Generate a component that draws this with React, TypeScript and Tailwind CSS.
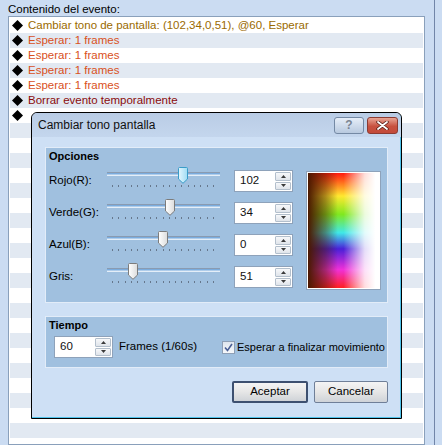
import React from 'react'

const ROWS = [
  { text: 'Cambiar tono de pantalla: (102,34,0,51), @60, Esperar', color: 'text-[#9a6a00]' },
  { text: 'Esperar: 1 frames', color: 'text-[#d9501c]' },
  { text: 'Esperar: 1 frames', color: 'text-[#d9501c]' },
  { text: 'Esperar: 1 frames', color: 'text-[#d9501c]' },
  { text: 'Esperar: 1 frames', color: 'text-[#d9501c]' },
  { text: 'Borrar evento temporalmente', color: 'text-[#8a0c0c]' },
  { text: '', color: '' },
]

const SLIDERS = [
  { label: 'Rojo(R):', value: '102', pos: 0.7, focus: true },
  { label: 'Verde(G):', value: '34', pos: 0.567, focus: false },
  { label: 'Azul(B):', value: '0', pos: 0.5, focus: false },
  { label: 'Gris:', value: '51', pos: 0.2, focus: false },
]

function Diamond() {
  return (
    <svg width="11" height="11" viewBox="0 0 11 11" className="shrink-0">
      <polygon points="5.5,0 11,5.5 5.5,11 0,5.5" fill="#000" />
    </svg>
  )
}

function Spin({ value, w = 'w-[59px]' }: { value: string; w?: string }) {
  return (
    <div className={`${w} h-[22px] border border-[#8ea2ba] bg-white flex items-center shrink-0`}>
      <span className="flex-1 pl-[5px] text-[11.5px] text-[#111] leading-none">{value}</span>
      <div className="w-[17px] h-full flex flex-col gap-px py-px pr-px">
        {[0, 1].map(i => (
          <div key={i} className="flex-1 border border-[#b3bfcc] rounded-[1px] bg-[linear-gradient(#f7f8fa,#dfe4ea)] flex items-center justify-center">
            <svg width="5" height="3" viewBox="0 0 5 3">
              <polygon points={i === 0 ? '2.5,0 5,3 0,3' : '0,0 5,0 2.5,3'} fill="#3a3a3a" />
            </svg>
          </div>
        ))}
      </div>
    </div>
  )
}

function Slider({ pos, focus }: { pos: number; focus: boolean }) {
  return (
    <div className="relative w-[113px] h-[32px] shrink-0">
      <div className="absolute left-0 right-0 top-[7px] h-[4px] border-t border-[#8a9bb1] bg-[linear-gradient(#5f9ad6,#ffffff)]" />
      <div className="absolute left-[5px] w-[102px] top-[20px] h-[2px] flex justify-between">
        {Array.from({ length: 17 }).map((_, i) => (
          <div key={i} className="w-px h-full bg-[#66778c]" />
        ))}
      </div>
      <svg
        width="10"
        height="17"
        viewBox="0 0 10 17"
        className="absolute top-[2px]"
        style={{ left: Math.round(5 + pos * 101 - 4.5) }}
      >
        <defs>
          <linearGradient id={focus ? 'tf' : 'tn'} x1="0" y1="0" x2="1" y2="0">
            <stop offset="0" stopColor={focus ? '#e4f6fd' : '#ffffff'} />
            <stop offset="1" stopColor={focus ? '#9fdcf4' : '#dcdcdc'} />
          </linearGradient>
        </defs>
        <path
          d="M1.5 0.5 H8.5 Q9.5 0.5 9.5 1.5 V12 L5 16.3 L0.5 12 V1.5 Q0.5 0.5 1.5 0.5 Z"
          fill={`url(#${focus ? 'tf' : 'tn'})`}
          stroke={focus ? '#3a9cc8' : '#7c7c7c'}
        />
      </svg>
    </div>
  )
}

export default function App() {
  return (
    <div className="relative w-[442px] h-[445px] overflow-hidden bg-[#cbdcf2] font-['Liberation_Sans',Arial,sans-serif] text-[11px] text-black">
      <div className="flex h-full">
        <div className="w-[434px] flex flex-col pl-[8px] pr-[9px]">
          <div className="h-[16px] text-[11.5px] leading-[16px] pt-px">Contenido del evento:</div>
          <div className="flex-1 border border-[#8aa0bb] bg-white p-px overflow-hidden">
            {Array.from({ length: 29 }).map((_, i) => {
              const r = ROWS[i]
              return (
                <div key={i} className={`h-[15px] flex items-center gap-[5px] pl-[2px] ${i % 2 ? 'bg-[#e2e9f2]' : 'bg-white'}`}>
                  {r && <Diamond />}
                  {r && <span className={`${r.color} text-[11.5px] leading-none pt-px`}>{r.text}</span>}
                </div>
              )
            })}
          </div>
        </div>
        <div className="w-px h-full bg-[#7185a8]" />
      </div>

      {/* dialog */}
      <div className="absolute left-[31px] top-[112px] w-[371px] h-[307px] border border-black rounded-t-[6px] bg-[#cee0f5] shadow-[inset_-1px_-1px_0_#4ec2ea] flex flex-col overflow-hidden">
        <div className="h-[24px] shrink-0 flex items-center pl-[6px] pr-[3px] rounded-t-[5px] bg-[linear-gradient(#b9cce5,#c4d6ed)]">
          <span className="flex-1 text-[12px] text-[#111]">Cambiar tono pantalla</span>
          <div className="w-[30px] h-[17px] rounded-[3px] border border-[#7489a4] bg-[linear-gradient(#e6eef8,#b8c9df)] flex items-center justify-center mr-[3px]">
            <span className="text-[12px] font-bold text-[#7b8593] leading-none">?</span>
          </div>
          <div className="w-[31px] h-[17px] rounded-[3px] border border-[#8c3b32] bg-[linear-gradient(#e8a595,#c8513f_55%,#c34a3a)] flex items-center justify-center">
            <svg width="13" height="9" viewBox="0 0 13 9">
              <path d="M2 1 L11 8 M11 1 L2 8" stroke="#5a2018" strokeWidth="3.4" strokeLinecap="round" />
              <path d="M2 1 L11 8 M11 1 L2 8" stroke="#fff" strokeWidth="1.8" strokeLinecap="round" />
            </svg>
          </div>
        </div>

        <div className="flex-1 flex flex-col px-[13px] pt-[10px]">
          {/* Opciones */}
          <div className="h-[156px] border border-[#e2ecf8] bg-[#a0c0df] flex flex-col">
            <div className="h-[17px] pl-[3px] font-bold leading-[17px]">Opciones</div>
            <div className="flex">
              <div className="flex flex-col">
                {SLIDERS.map(s => (
                  <div key={s.label} className="h-[32px] flex items-center">
                    <span className="w-[61px] pl-[3px] text-[11.5px]">{s.label}</span>
                    <Slider pos={s.pos} focus={s.focus} />
                    <div className="w-[14px]" />
                    <Spin value={s.value} />
                  </div>
                ))}
              </div>
              <div className="ml-[13px] mt-[6px] w-[75px] h-[119px] border border-[#8ea2ba] bg-white p-px">
                <div className="relative w-full h-full bg-[linear-gradient(to_bottom,#ff1a10,#ffe830_20%,#80e820_36%,#40e8e8_52%,#4a20d8_66%,#f030d8_84%,#ff2020)]">
                  <div className="absolute inset-0 bg-[linear-gradient(to_right,rgba(75,25,0,1),rgba(75,25,0,0.45)_25%,rgba(75,25,0,0)_42%,rgba(255,255,255,0)_50%,rgba(255,255,255,0.85)_80%,rgba(255,255,255,1)_95%)]" />
                </div>
              </div>
            </div>
          </div>

          {/* Tiempo */}
          <div className="mt-[13px] h-[52px] border border-[#e2ecf8] bg-[#a0c0df] flex flex-col">
            <div className="h-[17px] pl-[3px] font-bold leading-[17px]">Tiempo</div>
            <div className="flex items-center pl-[8px] mt-[2px] whitespace-nowrap">
              <Spin value="60" />
              <span className="ml-[6px] w-[103px] text-[11.5px]">Frames (1/60s)</span>
              <div className="w-[13px] h-[13px] shrink-0 border border-[#8e9fb5] bg-[linear-gradient(#dfe6ee,#f6f8fb)] flex items-center justify-center">
                <svg width="9" height="9" viewBox="0 0 9 9">
                  <path d="M1 4.5 L3.5 7.5 L8 1" stroke="#4a5f95" strokeWidth="1.6" fill="none" />
                </svg>
              </div>
              <span className="ml-[2px] text-[11px]">Esperar a finalizar movimiento</span>
            </div>
          </div>

          <div className="mt-[13px] flex justify-end gap-[6px]">
            <div className="w-[76px] h-[22px] border-2 border-[#3d5070] rounded-[2px] bg-[linear-gradient(#f4f4f4,#e6e6e6_50%,#cfd3d8)] flex items-center justify-center text-[11.5px]">
              Aceptar
            </div>
            <div className="w-[74px] h-[22px] border border-[#6f7f98] rounded-[2px] bg-[linear-gradient(#f4f4f4,#e6e6e6_50%,#cfd3d8)] flex items-center justify-center text-[11.5px]">
              Cancelar
            </div>
          </div>
        </div>
      </div>
    </div>
  )
}
